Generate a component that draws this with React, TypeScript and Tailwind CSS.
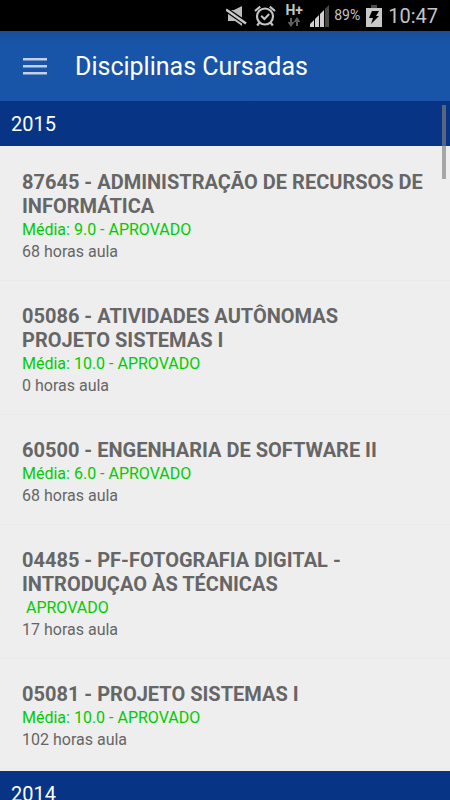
import React from 'react'

interface Disciplina {
    codigo: string
    nome: string
    media?: string
    situacao: string
    horas: number
}

interface Ano {
    ano: number
    disciplinas: Disciplina[]
}

const anos: Ano[] = [
    {
        ano: 2015,
        disciplinas: [
            {
                codigo: '87645',
                nome: 'ADMINISTRAÇÃO DE RECURSOS DE INFORMÁTICA',
                media: '9.0',
                situacao: 'APROVADO',
                horas: 68,
            },
            {
                codigo: '05086',
                nome: 'ATIVIDADES AUTÔNOMAS PROJETO SISTEMAS I',
                media: '10.0',
                situacao: 'APROVADO',
                horas: 0,
            },
            {
                codigo: '60500',
                nome: 'ENGENHARIA DE SOFTWARE II',
                media: '6.0',
                situacao: 'APROVADO',
                horas: 68,
            },
            {
                codigo: '04485',
                nome: 'PF-FOTOGRAFIA DIGITAL - INTRODUÇAO ÀS TÉCNICAS',
                situacao: 'APROVADO',
                horas: 17,
            },
            {
                codigo: '05081',
                nome: 'PROJETO SISTEMAS I',
                media: '10.0',
                situacao: 'APROVADO',
                horas: 102,
            },
        ],
    },
    { ano: 2014, disciplinas: [] },
]

const StatusBar: React.FC = () => {
    return (
        <div className="flex h-[31px] shrink-0 items-center justify-end bg-black pr-3 text-[#c4c4c4]">
            <svg width="22" height="22" viewBox="0 0 22 22" fill="none">
                <path d="M2 5h6l8-4v20l-7-5H2z" fill="#bdbdbd" />
                <path d="M0 4.5l21 14.5" stroke="#000" strokeWidth="5" />
                <path d="M0 4.5l20 14" stroke="#c8c8c8" strokeWidth="2.6" />
            </svg>
            <svg
                className="ml-1.5"
                width="22"
                height="22"
                viewBox="0 0 22 22"
                fill="none"
                stroke="#c4c4c4"
                strokeWidth="2.2"
            >
                <circle cx="11" cy="11.5" r="8" />
                <path d="M1 6l5.2-4.4M21 6l-5.2-4.4M5.5 17.5l-2.3 3M16.5 17.5l2.3 3" />
                <path d="M7.2 10.8l3.2 3.2 4.8-5" strokeWidth="2" />
            </svg>
            <div className="ml-2 flex w-5 flex-col items-center gap-px">
                <span className="text-[14px] leading-3 font-bold">H+</span>
                <svg width="12" height="10" viewBox="0 0 12 10" fill="#606060">
                    <path d="M2 1h2v4h2.5L3 10-.5 5H2zM8 9h2V5h2.500L9 0 5.500 5H8z" />
                </svg>
            </div>
            <svg className="ml-1.5" width="20" height="22" viewBox="0 0 20 22">
                <path d="M0 22v-3l4-4v7zM5 22v-8l4-4v12zM10 22V9l4-4v17z" fill="#d0d0d0" />
                <path d="M15 22V4l4-4v22z" fill="#4a4a4a" />
            </svg>
            <span className="ml-1 text-[14px]">89%</span>
            <svg className="ml-1.5" width="16" height="24" viewBox="0 0 16 24">
                <path d="M5 1h6v3H5z" fill="#4d4d4d" />
                <path d="M0 4h16v19H0z" fill="#c8c8c8" />
                <path d="M6 7h7l-3 5h3L5 20l2-6H3z" fill="#000" />
            </svg>
            <span className="ml-1.5 text-[20px]">10:47</span>
        </div>
    )
}

const DisciplinaItem: React.FC<{ disciplina: Disciplina }> = ({
    disciplina,
}) => {
    const { codigo, nome, media, situacao, horas } = disciplina

    return (
        <li className="border-b border-[#eaeaea] px-[22px] pt-[23px] pb-[17px]">
            <h3 className="mb-px text-[20px] leading-6 font-bold text-[#666666]">
                {`${codigo} - ${nome}`}
            </h3>
            <p className="text-[16px] leading-[22px] whitespace-pre text-[#00cc00]">
                {media ? `Média: ${media} - ${situacao}` : ` ${situacao}`}
            </p>
            <p className="text-[16px] leading-[22px] text-[#666666]">
                {`${horas} horas aula`}
            </p>
        </li>
    )
}

const App: React.FC = () => {
    return (
        <div className="flex h-screen flex-col overflow-hidden bg-[#eeeeee] font-[Roboto,sans-serif]">
            <StatusBar />
            <header className="flex h-[70px] shrink-0 items-center bg-[#1855a8] bg-linear-to-b from-[#184e99] to-[#1855a8] to-20% pt-0.5 pl-[23px] text-white">
                <button type="button" aria-label="Menu">
                    <svg width="24" height="18" viewBox="0 0 24 18" fill="#c3d0e8">
                        <path d="M0 0h24v2.500H0zM0 7h24v2.500H0zM0 14h24v2.500H0z" />
                    </svg>
                </button>
                <h1 className="ml-7 text-[25px]">Disciplinas Cursadas</h1>
            </header>
            <main className="relative min-h-0 flex-1 overflow-hidden">
                {anos.map(({ ano, disciplinas }) => (
                    <section key={ano}>
                        <h2 className="h-[45px] bg-[#083486] pl-[11px] text-[20px] leading-[47px] text-white">
                            {ano}
                        </h2>
                        <ul className="pt-px pb-0.5">
                            {disciplinas.map((disciplina) => (
                                <DisciplinaItem
                                    key={disciplina.codigo}
                                    disciplina={disciplina}
                                />
                            ))}
                        </ul>
                    </section>
                ))}
                <div className="absolute top-1 right-1 h-[74px] w-1 bg-[#808080]/65" />
            </main>
        </div>
    )
}

export default App
